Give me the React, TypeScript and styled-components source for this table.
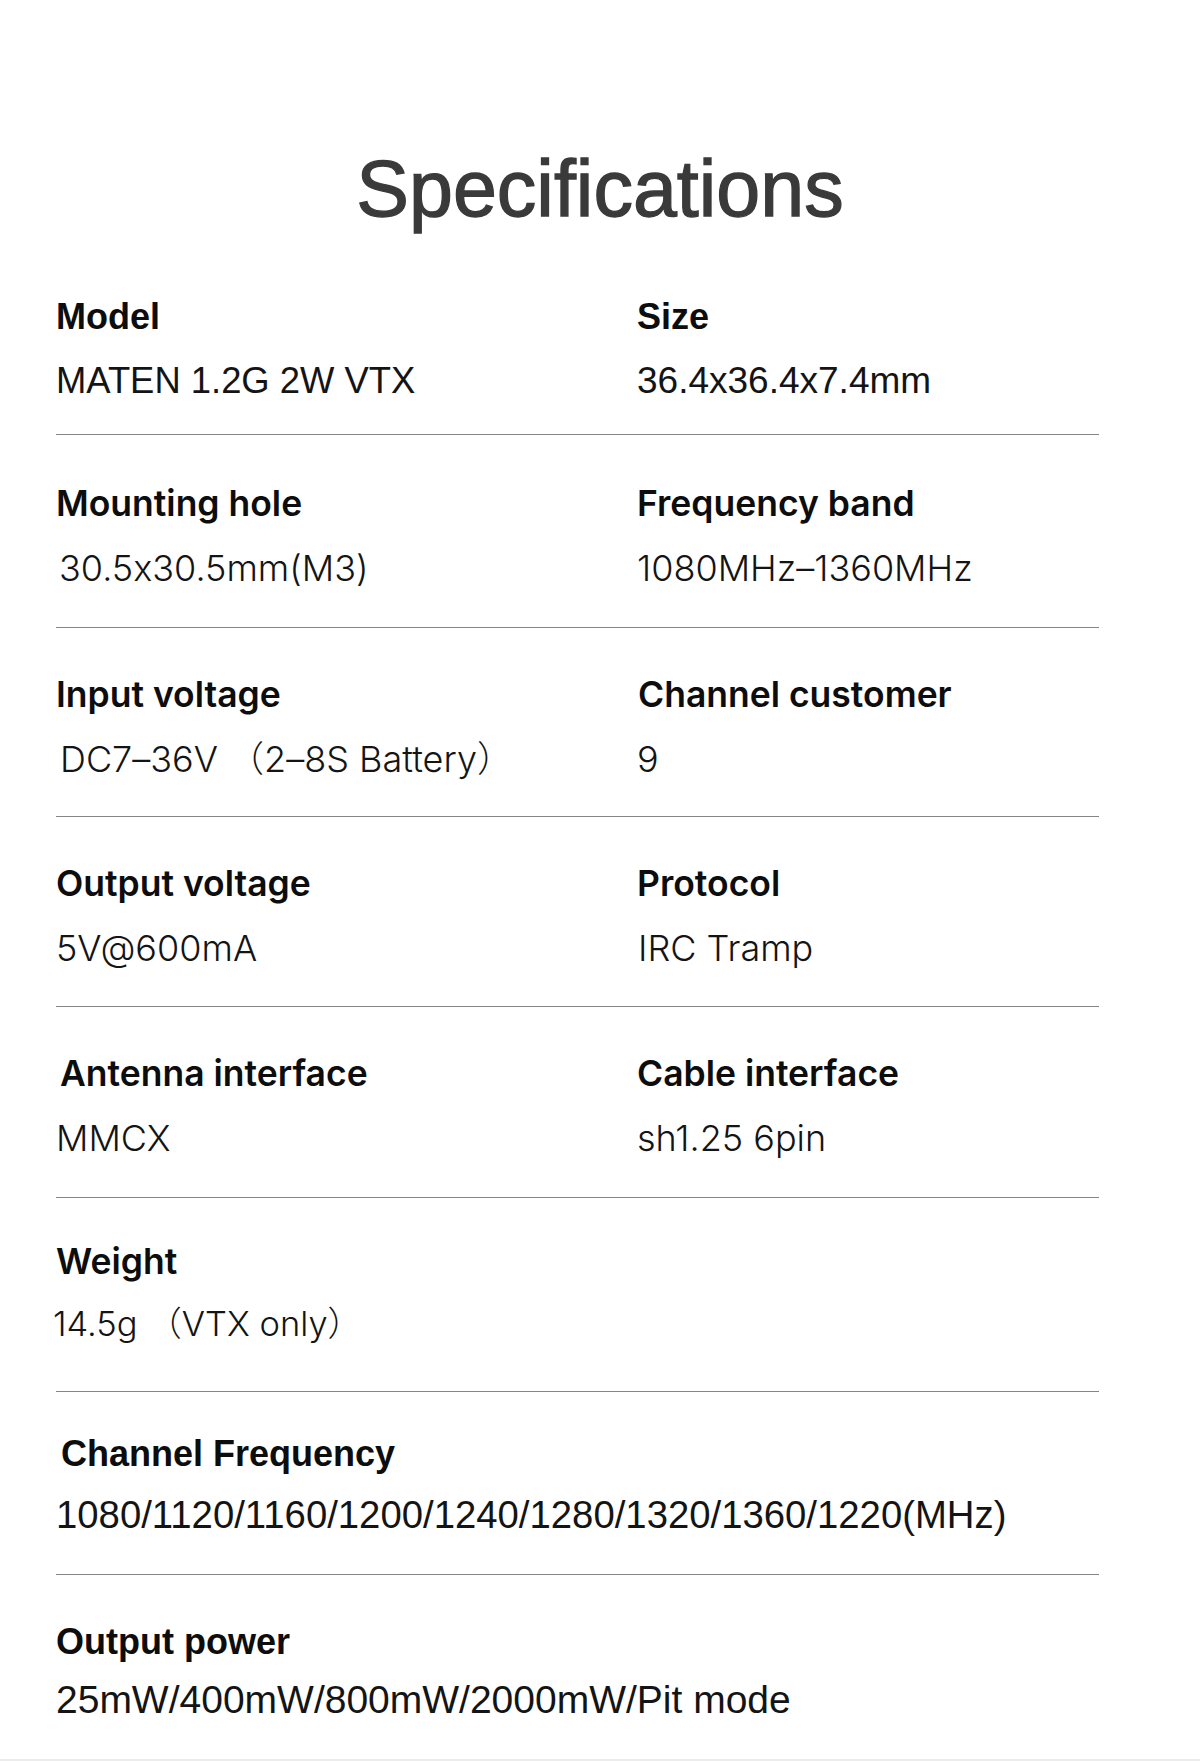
import React from 'react';
import styled, { createGlobalStyle } from 'styled-components';

type Face = 'helv' | 'ping';

interface Cell {
  label: string;
  value: string;
  labelFace: Face;
  valueFace: Face;
  labelSize: number;
  valueSize: number;
  indent?: number;
  valueIndent?: number;
}

interface SpecRow {
  height: number;
  pad?: number;
  gap?: number;
  cells: Cell[];
}

const GlobalStyle = createGlobalStyle`
  html, body {
    margin: 0;
    padding: 0;
    background: #ffffff;
  }
  body {
    font-family: "Liberation Sans", Arial, sans-serif;
    -webkit-font-smoothing: antialiased;
  }
`;

const faces: Record<Face, string> = {
  helv: '"Liberation Sans", Arial, sans-serif',
  ping: 'Inter, "Noto Sans CJK SC", sans-serif',
};

const Page = styled.div`
  width: 1200px;
  height: 1761px;
  box-sizing: border-box;
  border-bottom: 2px solid #ececec;
  overflow: hidden;
`;

const Title = styled.h1`
  margin: 0;
  padding-top: 139px;
  height: 250px;
  box-sizing: border-box;
  text-align: center;
  font-family: "Liberation Sans", Arial, sans-serif;
  font-weight: 400;
  font-size: 79px;
  line-height: 100px;
  color: #3a3a3a;
  -webkit-text-stroke: 1.3px #3a3a3a;
`;

const Table = styled.div`
  margin-left: 56px;
  width: 1043px;
`;

const Row = styled.div<{ $height: number; $pad: number; $last?: boolean }>`
  display: grid;
  grid-template-columns: 581px 1fr;
  height: ${(p) => p.$height}px;
  box-sizing: border-box;
  padding-top: ${(p) => p.$pad}px;
  border-bottom: ${(p) => (p.$last ? 'none' : '1px solid #858585')};
`;

const Column = styled.div<{ $gap: number }>`
  display: flex;
  flex-direction: column;
  gap: ${(p) => p.$gap}px;
`;

const Label = styled.div<{ $face: Face; $size: number; $indent: number }>`
  font-family: ${(p) => faces[p.$face]};
  font-weight: ${(p) => (p.$face === 'helv' ? 700 : 600)};
  font-size: ${(p) => p.$size}px;
  line-height: 44px;
  height: 44px;
  color: #0d0d0d;
  margin-left: ${(p) => p.$indent}px;
  white-space: nowrap;
  font-feature-settings: "calt" 0;
`;

const Value = styled.div<{ $face: Face; $size: number; $indent: number }>`
  font-family: ${(p) => faces[p.$face]};
  font-weight: ${(p) => (p.$face === 'helv' ? 400 : 300)};
  font-size: ${(p) => p.$size}px;
  line-height: 48px;
  height: 48px;
  color: #141414;
  margin-left: ${(p) => p.$indent}px;
  white-space: nowrap;
  font-feature-settings: "calt" 0;
`;

const rows: SpecRow[] = [
  {
    height: 185,
    cells: [
      { label: 'Model', value: 'MATEN 1.2G 2W VTX', labelFace: 'helv', valueFace: 'helv', labelSize: 36, valueSize: 36.4 },
      { label: 'Size', value: '36.4x36.4x7.4mm', labelFace: 'helv', valueFace: 'helv', labelSize: 36, valueSize: 37 },
    ],
  },
  {
    height: 193,
    pad: 47,
    cells: [
      { label: 'Mounting hole', value: '30.5x30.5mm(M3)', labelFace: 'ping', valueFace: 'ping', labelSize: 35.5, valueSize: 36, valueIndent: 3 },
      { label: 'Frequency band', value: '1080MHz–1360MHz', labelFace: 'ping', valueFace: 'ping', labelSize: 35.5, valueSize: 36 },
    ],
  },
  {
    height: 189,
    cells: [
      { label: 'Input voltage', value: 'DC7–36V （2–8S Battery）', labelFace: 'ping', valueFace: 'ping', labelSize: 35.5, valueSize: 36, valueIndent: 4 },
      { label: 'Channel customer', value: '9', labelFace: 'ping', valueFace: 'ping', labelSize: 35.5, valueSize: 36, indent: 1 },
    ],
  },
  {
    height: 190,
    cells: [
      { label: 'Output voltage', value: '5V@600mA', labelFace: 'ping', valueFace: 'ping', labelSize: 35.5, valueSize: 36 },
      { label: 'Protocol', value: 'IRC Tramp', labelFace: 'ping', valueFace: 'ping', labelSize: 35.5, valueSize: 36, valueIndent: 1 },
    ],
  },
  {
    height: 191,
    cells: [
      { label: 'Antenna interface', value: 'MMCX', labelFace: 'ping', valueFace: 'ping', labelSize: 35.5, valueSize: 36, indent: 4 },
      { label: 'Cable interface', value: 'sh1.25 6pin', labelFace: 'ping', valueFace: 'ping', labelSize: 35.5, valueSize: 36 },
    ],
  },
  {
    height: 194,
    pad: 42,
    gap: 16,
    cells: [
      { label: 'Weight', value: '14.5g （VTX only）', labelFace: 'ping', valueFace: 'ping', labelSize: 35.5, valueSize: 34.5, valueIndent: -3 },
    ],
  },
  {
    height: 183,
    pad: 40,
    gap: 15,
    cells: [
      { label: 'Channel Frequency', value: '1080/1120/1160/1200/1240/1280/1320/1360/1220(MHz)', labelFace: 'helv', valueFace: 'helv', labelSize: 36, valueSize: 38.3, indent: 5 },
    ],
  },
  {
    height: 185,
    gap: 12,
    cells: [
      { label: 'Output power', value: '25mW/400mW/800mW/2000mW/Pit mode', labelFace: 'helv', valueFace: 'helv', labelSize: 36, valueSize: 39 },
    ],
  },
];

const App: React.FC = () => (
  <Page>
    <GlobalStyle />
    <Title>Specifications</Title>
    <Table>
      {rows.map((row, i) => (
        <Row key={i} $height={row.height} $pad={row.pad ?? 45} $last={i === rows.length - 1}>
          {row.cells.map((cell) => (
            <Column key={cell.label} $gap={row.gap ?? 18}>
              <Label $face={cell.labelFace} $size={cell.labelSize} $indent={cell.indent ?? 0}>
                {cell.label}
              </Label>
              <Value $face={cell.valueFace} $size={cell.valueSize} $indent={cell.valueIndent ?? 0}>
                {cell.value}
              </Value>
            </Column>
          ))}
        </Row>
      ))}
    </Table>
  </Page>
);

export default App;
